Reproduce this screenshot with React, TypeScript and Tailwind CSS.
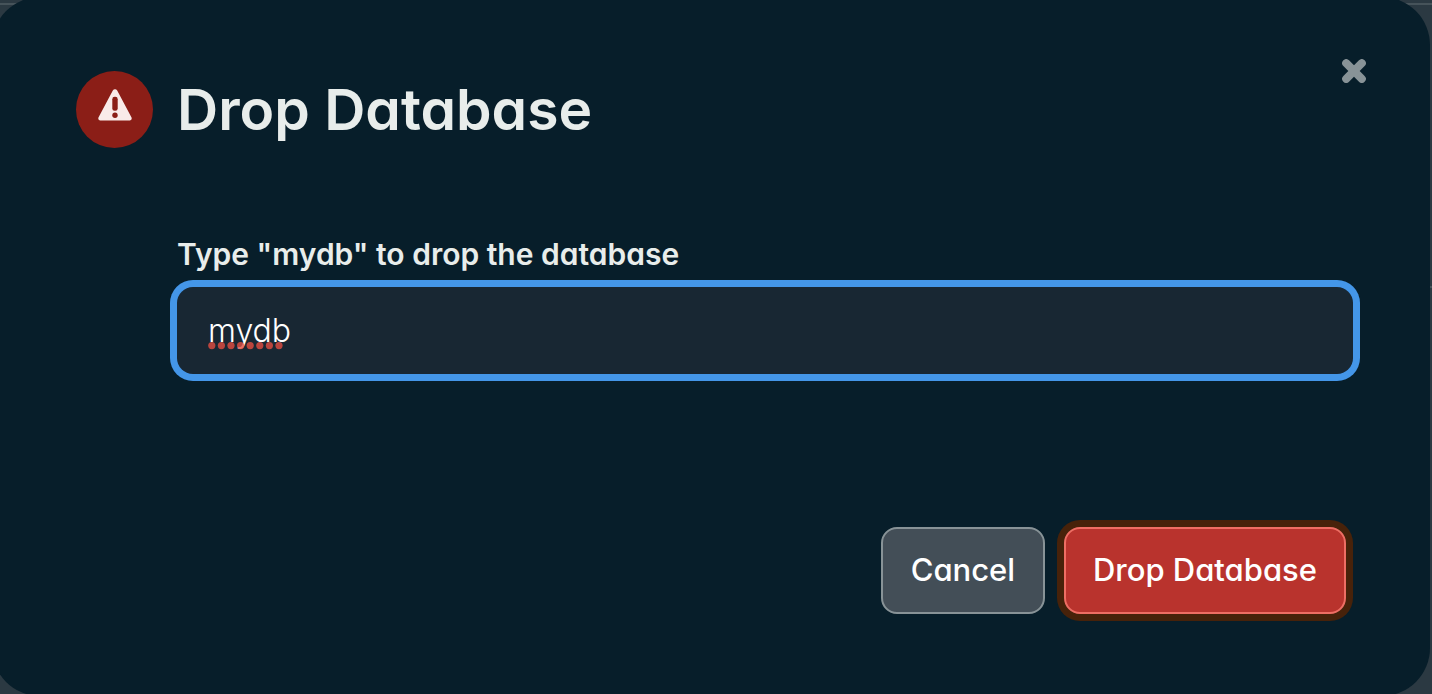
import { useState } from "react";

function WarningIcon() {
  return (
    <svg width="34" height="32" viewBox="0 0 34 32" aria-hidden="true">
      <path
        d="M14.8 1.5C15.8 -0.1 18.2 -0.1 19.2 1.5L33.4 28.3C34.2 29.8 33.4 31.4 31.7 31.4H2.3C0.6 31.4 -0.2 29.8 0.6 28.3Z"
        fill="#f9ebe9"
      />
      <rect x="14.3" y="7.8" width="5.4" height="14" rx="2.4" fill="#8b1e17" />
      <circle cx="17" cy="26.3" r="2.7" fill="#8b1e17" />
    </svg>
  );
}

function CloseIcon() {
  return (
    <svg width="24" height="24" viewBox="0 0 24 24" aria-hidden="true">
      <path d="M4.2 4.2L19.8 19.8M19.8 4.2L4.2 19.8" stroke="#889397" strokeWidth="8" strokeLinecap="round" />
    </svg>
  );
}

function SpellingMarks() {
  return (
    <svg
      className="pointer-events-none absolute bottom-6 left-[31px]"
      width="80"
      height="8"
      viewBox="0 0 80 8"
      aria-hidden="true"
    >
      {[0, 1, 2, 3, 4, 5, 6, 7].map((i) => (
        <circle key={i} cx={3.8 + i * 9.6} cy="3.6" r="3.6" fill="#e34d41" fillOpacity="0.8" />
      ))}
    </svg>
  );
}

export default function App() {
  const [name, setName] = useState("mydb");

  return (
    <div className="relative min-h-screen overflow-hidden bg-[#2b3942] font-['Inter','Liberation_Sans',sans-serif] [font-feature-settings:'cv11']">
      <div className="absolute inset-0 flex flex-col" aria-hidden="true">
        <div className="h-[5px] border-b-2 border-[#46535a]" />
        <div className="h-[283px] border-b-2 border-[#46535a]" />
      </div>

      <div
        role="dialog"
        aria-labelledby="dialog-title"
        className="relative -mb-1 -ml-2 -mt-[3px] mr-0.5 rounded-[48px] bg-[#071e2a] pb-[82px] pl-[84px] pr-[77px] pt-[74px]"
      >
        <button
          type="button"
          aria-label="Close"
          className="absolute right-14 top-[54px] flex size-10 items-center justify-center"
        >
          <CloseIcon />
        </button>

        <header className="flex items-center gap-6">
          <div className="flex size-[77px] shrink-0 items-center justify-center rounded-full bg-[#8b1e17] pb-[9px]">
            <WarningIcon />
          </div>
          <h1 id="dialog-title" className="text-[57px] font-semibold leading-[76px] text-[#e8edeb]">
            Drop Database
          </h1>
        </header>

        <form className="pl-[101px] pt-[86px]" onSubmit={(e) => e.preventDefault()}>
          <label
            htmlFor="database-name"
            className="block text-[30px] font-semibold leading-10 text-[#e8edeb]"
          >
            Type "mydb" to drop the database
          </label>
          <div className="relative mt-[13px]">
            <input
              id="database-name"
              type="text"
              value={name}
              spellCheck={false}
              onChange={(e) => setName(e.target.value)}
              className="block h-[87px] w-full rounded-2xl bg-[#182733] px-[31px] text-[32px] font-light text-white outline-none ring-[7px] ring-[#4496e8]"
            />
            <SpellingMarks />
          </div>
          <div className="flex justify-end gap-[19px] pr-[7px] pt-[153px]">
            <button
              type="button"
              className="h-[87px] min-w-[164px] rounded-2xl border-2 border-[#889397] bg-[#434e57] px-[27px] text-[31px] font-medium text-white"
            >
              Cancel
            </button>
            <button
              type="submit"
              className="h-[87px] min-w-[164px] rounded-2xl border-2 border-[#ee6e64] bg-[#b9332d] px-[27px] text-[31px] font-medium text-white ring-[7px] ring-[#47220a]"
            >
              Drop Database
            </button>
          </div>
        </form>
      </div>
    </div>
  );
}
